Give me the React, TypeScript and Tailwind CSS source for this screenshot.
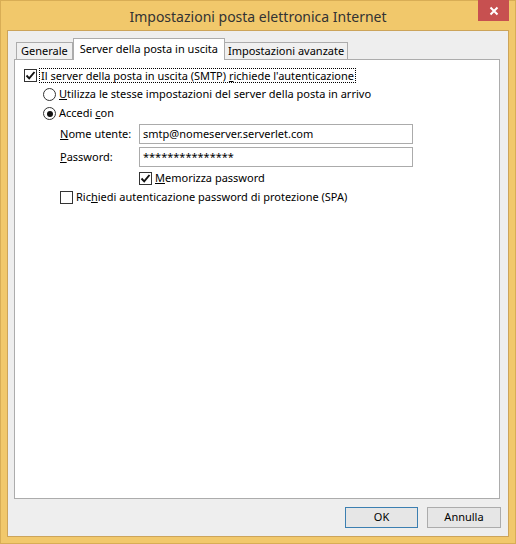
import React from 'react';

const FONT = "font-['Noto_Sans','Open_Sans',sans-serif]";

function Check({ checked }: { checked?: boolean }) {
  return (
    <span className="flex h-[13px] w-[13px] shrink-0 items-center justify-center border border-[#333333] bg-white">
      {checked && (
        <svg width="11" height="11" viewBox="0 0 11 11">
          <path d="M1.5 5.5 L4.2 8.3 L9.5 2" fill="none" stroke="#111" strokeWidth="1.9" />
        </svg>
      )}
    </span>
  );
}

function Radio({ checked }: { checked?: boolean }) {
  return (
    <span className="flex h-[13px] w-[13px] shrink-0 items-center justify-center rounded-full border border-[#333333] bg-white">
      {checked && <span className="h-[6px] w-[6px] rounded-full bg-[#111]" />}
    </span>
  );
}

function Field({ value }: { value: string }) {
  return (
    <div className="flex h-[20px] w-[274px] items-center border border-[#ababab] bg-white pl-[3px] text-[11px] text-black">
      {value}
    </div>
  );
}

export default function App() {
  return (
    <div className={`${FONT} flex h-[544px] w-[516px] flex-col border border-[#d8ad55] bg-[#f1c86b] text-[11px] text-black`}>
      {/* title bar */}
      <div className="relative h-[29px] shrink-0">
        <div className="pt-[5px] text-center text-[14px] text-[#333]">Impostazioni posta elettronica Internet</div>
        <div className="absolute right-[6px] top-[-1px] flex h-[21px] w-[31px] items-center justify-center bg-[#c75050]">
          <svg width="10" height="10" viewBox="0 0 10 10">
            <path d="M1.5 1.5 L8.5 8.5 M8.5 1.5 L1.5 8.5" stroke="#fff" strokeWidth="2" />
          </svg>
        </div>
      </div>

      {/* client area */}
      <div className="mx-[6px] flex h-[507px] flex-col border border-[#cca45a] bg-[#eeeeee] px-[6px] pt-[7px]">
        {/* tabs */}
        <div className="relative z-10 flex h-[21px] items-end pl-[2px]">
          <div className="flex h-[17px] items-center border border-b-0 border-[#acacac] bg-[#f0f0f0] px-[4px]">Generale</div>
          <div className="-mb-px flex h-[22px] items-center border border-b-0 border-[#acacac] bg-white px-[6px]">Server della posta in uscita</div>
          <div className="flex h-[17px] items-center border border-b-0 border-l-0 border-[#acacac] bg-[#f0f0f0] px-[3px]">Impostazioni avanzate</div>
        </div>

        {/* panel */}
        <div className="h-[440px] w-[486px] border border-[#acacac] bg-white pl-[9px] pt-[8px]">
          <div className="flex h-[15px] items-center gap-[2px]">
            <Check checked />
            <span className="border border-dotted border-black px-px leading-[13px]">
              Il server della posta in uscita (SMTP) <u>r</u>ichiede l'autenticazione
            </span>
          </div>
          <div className="mt-[4px] flex h-[15px] items-center gap-[3px] pl-[19px]">
            <Radio />
            <span><u>U</u>tilizza le stesse impostazioni del server della posta in arrivo</span>
          </div>
          <div className="mt-[4px] flex h-[15px] items-center gap-[3px] pl-[19px]">
            <Radio checked />
            <span>Accedi <u>c</u>on</span>
          </div>
          <div className="mt-[3px] flex items-center pl-[36px]">
            <span className="w-[79px]"><u>N</u>ome utente:</span>
            <Field value="smtp@nomeserver.serverlet.com" />
          </div>
          <div className="mt-[3px] flex items-center pl-[36px]">
            <span className="w-[79px]"><u>P</u>assword:</span>
            <Field value="***************" />
          </div>
          <div className="mt-[4px] flex h-[15px] items-center gap-[3px] pl-[115px]">
            <Check checked />
            <span><u>M</u>emorizza password</span>
          </div>
          <div className="mt-[4px] flex h-[15px] items-center gap-[3px] pl-[36px]">
            <Check />
            <span>Ric<u>h</u>iedi autenticazione password di protezione (SPA)</span>
          </div>
        </div>

        {/* buttons */}
        <div className="mt-[8px] flex justify-end gap-[9px] pr-[1px]">
          <button className="flex h-[21px] w-[73px] items-center justify-center border border-[#3c7fb1] bg-[#e6e6e6]">OK</button>
          <button className="flex h-[21px] w-[74px] items-center justify-center border border-[#acacac] bg-[#e6e6e6]">Annulla</button>
        </div>
      </div>
    </div>
  );
}
